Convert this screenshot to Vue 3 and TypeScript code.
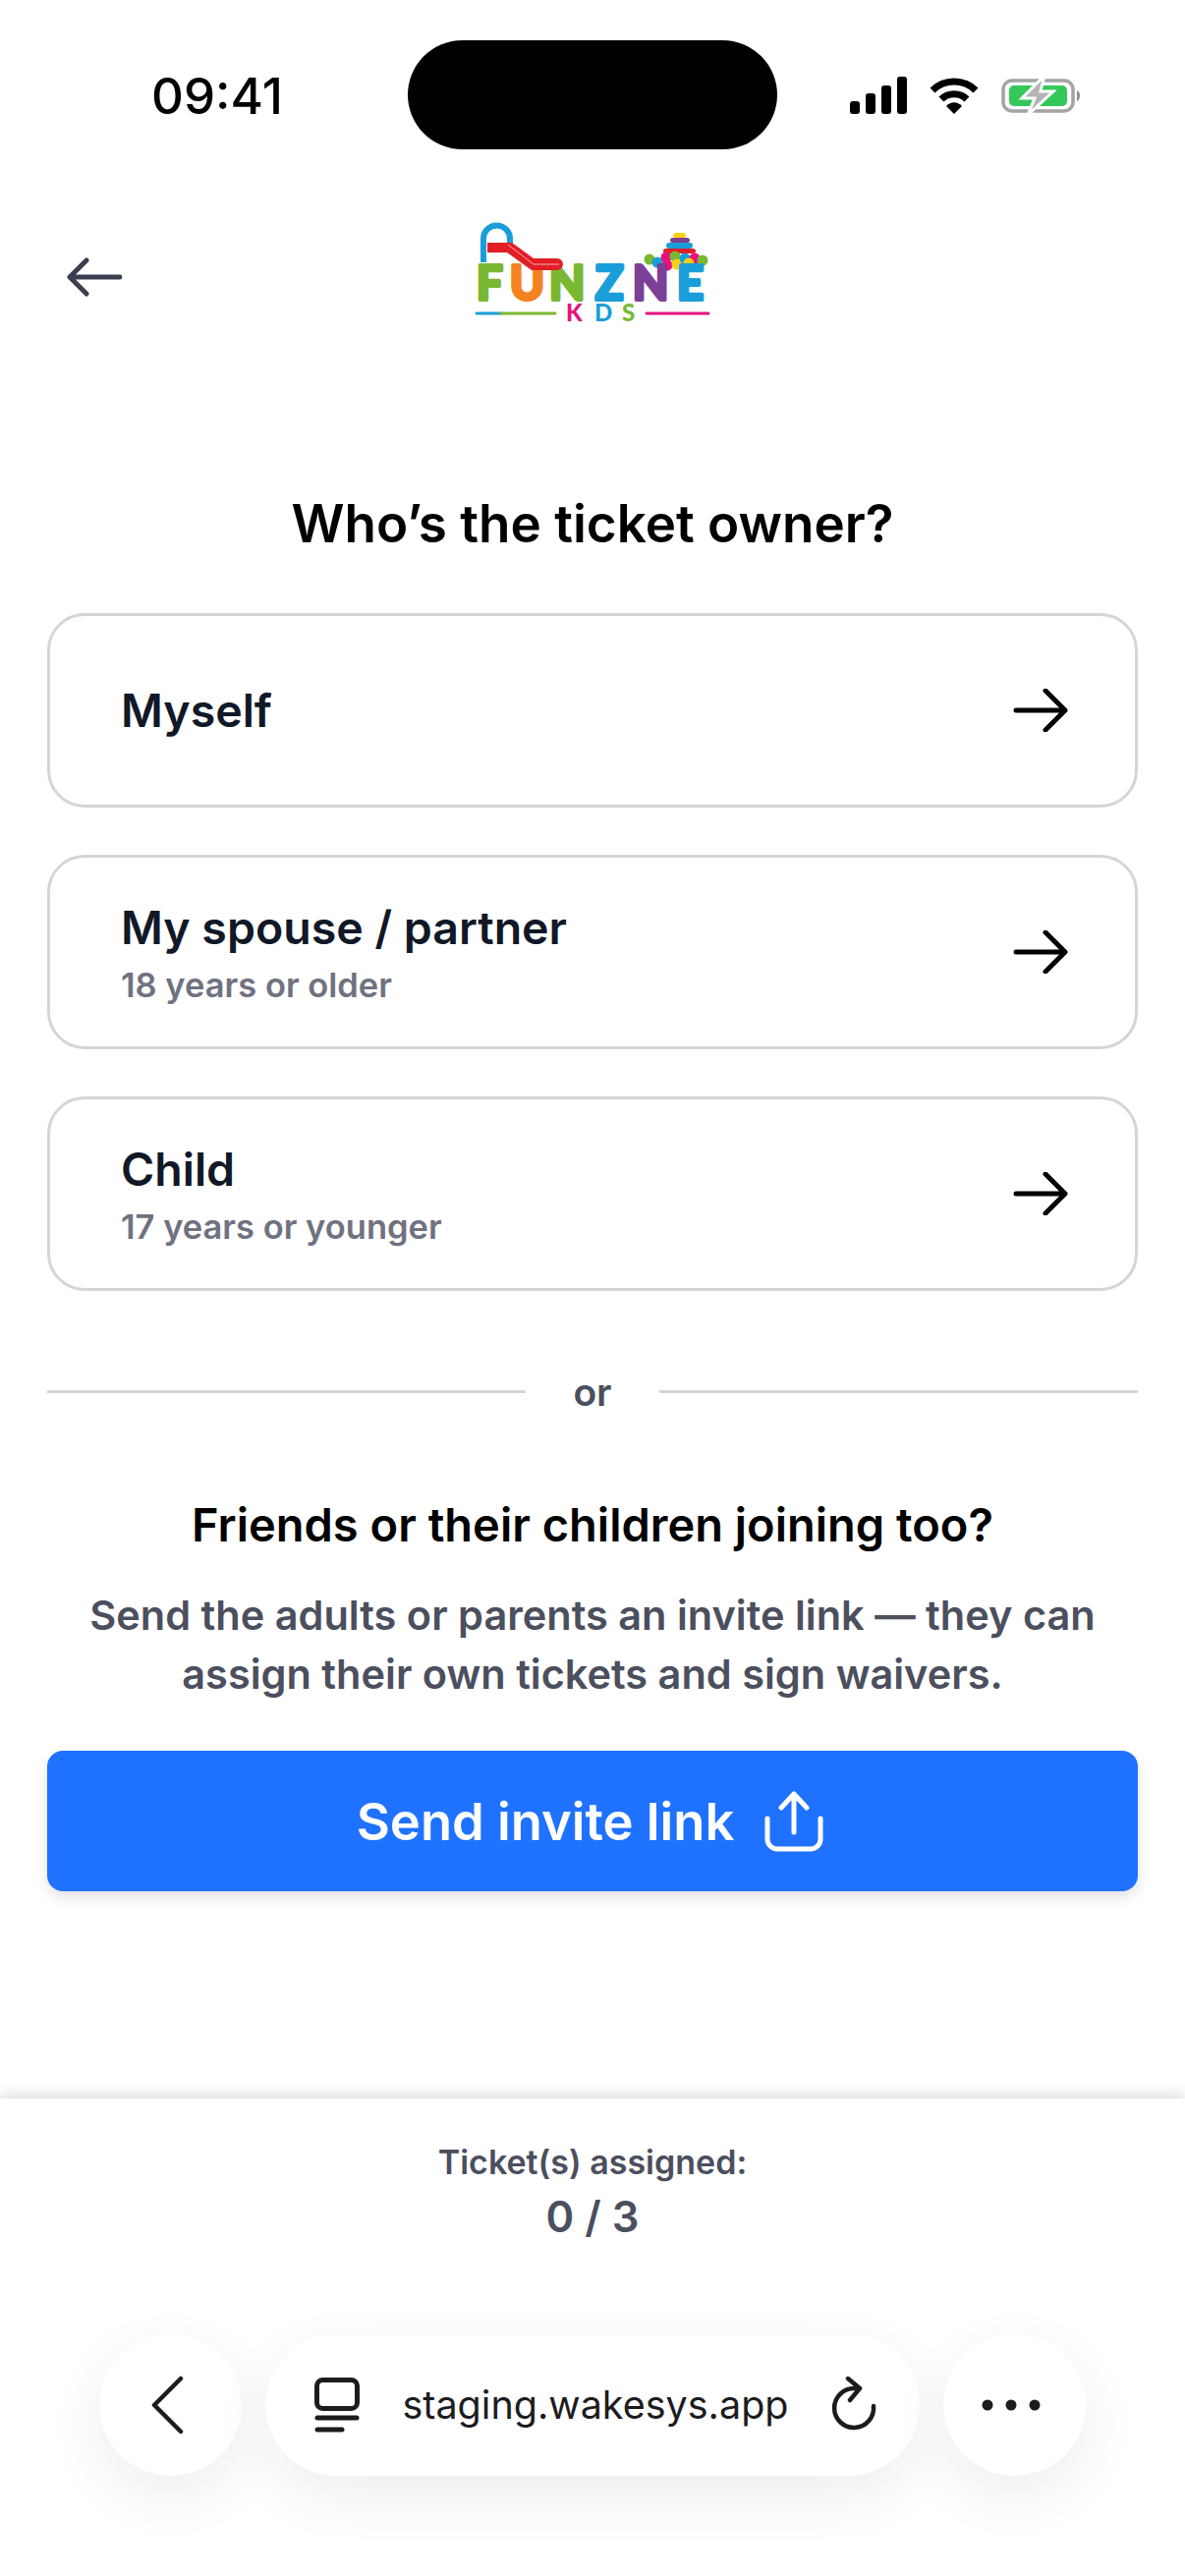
<script setup lang="ts">
interface Owner {
  title: string
  sub?: string
}

const owners: Owner[] = [
  { title: 'Myself' },
  { title: 'My spouse / partner', sub: '18 years or older' },
  { title: 'Child', sub: '17 years or younger' }
]

const balls = [
  { x: 178, y: 37, c: '#7ab833' },
  { x: 186, y: 40, c: '#1a9ed9' },
  { x: 195, y: 35, c: '#e5147d' },
  { x: 196, y: 43, c: '#e5147d' },
  { x: 204, y: 34, c: '#7ab833' },
  { x: 206, y: 42, c: '#fbd114' },
  { x: 214, y: 36, c: '#1a9ed9' },
  { x: 217, y: 42, c: '#1a9ed9' },
  { x: 224, y: 36, c: '#e5147d' },
  { x: 218, y: 41, c: '#fbd114' },
  { x: 232, y: 38, c: '#7ab833' }
]

const bigLetters = [
  { ch: 'F', x: 2, c: '#7ab833' },
  { ch: 'U', x: 36, c: '#f58220' },
  { ch: 'N', x: 76, c: '#7ab833' },
  { ch: 'Z', x: 123, c: '#1a9ed9' },
  { ch: 'N', x: 161, c: '#7b3f98' },
  { ch: 'E', x: 206, c: '#1a9ed9' }
]

const smallLetters = [
  { ch: 'K', x: 93, c: '#e5147d' },
  { ch: 'D', x: 122, c: '#1a9ed9' },
  { ch: 'S', x: 150, c: '#7ab833' }
]
</script>

<template>
  <div class="page">
    <div class="status-bar">
      <div class="time">09:41</div>
      <div class="island"></div>
      <div class="status-icons">
        <svg width="58" height="38" viewBox="0 0 58 38">
          <rect x="0" y="25" width="10" height="13" rx="3" />
          <rect x="16" y="17" width="10" height="21" rx="3" />
          <rect x="32" y="9" width="10" height="29" rx="3" />
          <rect x="48" y="0" width="10" height="38" rx="3" />
        </svg>
        <svg width="50" height="38" viewBox="0 0 50 38">
          <path d="M3 14 C15 2 35 2 47 14" fill="none" stroke="#000" stroke-width="7" />
          <path d="M12 23 C19 16 31 16 38 23" fill="none" stroke="#000" stroke-width="7" />
          <path d="M17 30 C22 25 28 25 33 30 L25 38 Z" fill="#000" />
        </svg>
        <svg width="82" height="40" viewBox="0 0 82 40">
          <rect x="2" y="5" width="71" height="31" rx="9" fill="none" stroke="#a4a4a4" stroke-width="3.5" />
          <rect x="8" y="10" width="59" height="21" rx="5" fill="#34c759" />
          <path d="M77 15 C81 16 81 25 77 26 Z" fill="#8e8e8e" />
          <path d="M44 0 L21 23 H34 L27 40 L53 16 H40 Z" fill="#b4b4b4" stroke="#fff" stroke-width="3" />
        </svg>
      </div>
    </div>

    <header class="topbar">
      <svg class="back-arrow" width="56" height="40" viewBox="0 0 56 40">
        <path d="M54 20 H3 M20 3 L3 20 L20 37" fill="none" stroke="#3a3f50" stroke-width="5" stroke-linecap="round" stroke-linejoin="round" />
      </svg>
      <svg class="logo" width="240" height="102" viewBox="0 0 240 102">
        <path d="M9 40 V16 A13.5 13.5 0 0 1 36 16 V23" fill="none" stroke="#1a9ed9" stroke-width="6" />
        <rect x="202" y="10" width="13" height="5" rx="2.5" fill="#fbd114" />
        <rect x="199" y="15" width="20" height="5" rx="2.5" fill="#7b3f98" />
        <rect x="195" y="20" width="27" height="6" rx="3" fill="#1a9ed9" />
        <rect x="192" y="26" width="33" height="5" rx="2.5" fill="#e31e26" />
        <circle v-for="(b, i) in balls" :key="i" :cx="b.x" :cy="b.y" r="5.5" :fill="b.c" />
        <text class="logo-big" y="78"><tspan v-for="(l, i) in bigLetters" :key="i" :x="l.x" :fill="l.c" :stroke="l.c">{{ l.ch }}</tspan></text>
        <path d="M13 20 H38 L60 36 H84 A6 6 0 0 1 84 48 H58 L33 30 H13 Z" fill="#e31e26" />
        <path d="M34 22 L60 42 H86" fill="none" stroke="#fff" stroke-width="0.8" opacity="0.8" />
        <text class="logo-small" y="100"><tspan v-for="(l, i) in smallLetters" :key="i" :x="l.x" :fill="l.c">{{ l.ch }}</tspan></text>
        <path d="M2 92 H27" stroke="#1a9ed9" stroke-width="3" stroke-linecap="round" />
        <path d="M27 92 H82" stroke="#7ab833" stroke-width="3" stroke-linecap="round" />
        <path d="M175 92 H238" stroke="#e5147d" stroke-width="3" stroke-linecap="round" />
      </svg>
      <div></div>
    </header>

    <main class="content">
      <h1 class="title">Who’s the ticket owner?</h1>

      <div class="owner-list">
        <div v-for="owner in owners" :key="owner.title" class="owner-card">
          <div class="owner-text">
            <div class="owner-title">{{ owner.title }}</div>
            <div v-if="owner.sub" class="owner-sub">{{ owner.sub }}</div>
          </div>
          <svg width="56" height="44" viewBox="0 0 56 44">
            <path d="M3 22 H52 M33 2 L53 22 L33 42" fill="none" stroke="#000" stroke-width="5" stroke-linecap="round" stroke-linejoin="round" />
          </svg>
        </div>
      </div>

      <div class="or-row">
        <span class="or-line"></span>
        <span class="or-text">or</span>
        <span class="or-line"></span>
      </div>

      <h2 class="invite-title">Friends or their children joining too?</h2>
      <p class="invite-text">Send the adults or parents an invite link — they can<br />assign their own tickets and sign waivers.</p>

      <button class="invite-btn">
        <span>Send invite link</span>
        <svg width="60" height="62" viewBox="0 0 60 62">
          <path d="M30 42 V3 M17 17 L30 3 L43 17" fill="none" stroke="#fff" stroke-width="5" stroke-linecap="round" stroke-linejoin="round" />
          <path d="M3 28 V49 A10 10 0 0 0 13 59 H47 A10 10 0 0 0 57 49 V28" fill="none" stroke="#fff" stroke-width="5" stroke-linecap="round" />
        </svg>
      </button>
    </main>

    <footer class="footer">
      <div class="assigned-label">Ticket(s) assigned:</div>
      <div class="assigned-count">0 / 3</div>

      <div class="browser-bar">
        <div class="round-btn">
          <svg class="shift-left" width="36" height="60" viewBox="0 0 36 60">
            <path d="M32 3 L5 30 L32 57" fill="none" stroke="#1c1c1e" stroke-width="4.5" stroke-linecap="round" stroke-linejoin="round" />
          </svg>
        </div>
        <div class="url-pill">
          <svg width="46" height="56" viewBox="0 0 46 56">
            <rect x="2.5" y="2.5" width="41" height="29" rx="6" fill="none" stroke="#1c1c1e" stroke-width="5" />
            <path d="M3 41 H43 M3 53 H28" stroke="#1c1c1e" stroke-width="5" stroke-linecap="round" />
          </svg>
          <span class="url-text">staging.wakesys.app</span>
          <svg width="48" height="58" viewBox="0 0 48 58">
            <path d="M24 12 A20 20 0 1 0 43 30" fill="none" stroke="#1c1c1e" stroke-width="4.5" stroke-linecap="round" />
            <path d="M17 2 L29 12 L19 24" fill="none" stroke="#1c1c1e" stroke-width="4.5" stroke-linecap="round" stroke-linejoin="round" />
          </svg>
        </div>
        <div class="round-btn">
          <svg class="shift-left" width="60" height="12" viewBox="0 0 60 12">
            <circle cx="6" cy="6" r="5.5" fill="#1c1c1e" />
            <circle cx="30" cy="6" r="5.5" fill="#1c1c1e" />
            <circle cx="54" cy="6" r="5.5" fill="#1c1c1e" />
          </svg>
        </div>
      </div>
    </footer>
  </div>
</template>

<style>
html,
body {
  margin: 0;
  background: #fff;
}
</style>

<style scoped>
.page {
  width: 1206px;
  height: 2622px;
  display: flex;
  flex-direction: column;
  background: #fff;
  font-family: Inter, "Noto Sans", sans-serif;
  overflow: hidden;
}

.status-bar {
  height: 149px;
  padding-top: 41px;
  display: grid;
  grid-template-columns: 415px 376px 1fr;
  align-items: start;
}

.time {
  height: 111px;
  padding-left: 154px;
  line-height: 114px;
  font-size: 51px;
  font-weight: 500;
  color: #000;
}

.island {
  height: 111px;
  border-radius: 56px;
  background: #000;
}

.status-icons {
  height: 111px;
  padding-left: 74px;
  display: flex;
  align-items: center;
  gap: 23px;
}

.topbar {
  height: 184px;
  display: grid;
  grid-template-columns: 1fr auto 1fr;
  align-items: center;
}

.back-arrow {
  margin-left: 68px;
}

.logo {
  margin-bottom: 8px;
  overflow: visible;
}

.logo-big {
  font-family: Lato, sans-serif;
  font-size: 47px;
  font-weight: 700;
  stroke-width: 4;
  stroke-linejoin: round;
}

.logo-small {
  font-family: Lato, sans-serif;
  font-size: 24px;
  font-weight: 900;
}

.content {
  padding: 129px 48px 0;
  display: flex;
  flex-direction: column;
}

.title {
  margin: 0 0 61px;
  text-align: center;
  font-size: 53px;
  line-height: 60px;
  font-weight: 600;
  color: #000;
}

.owner-list {
  display: flex;
  flex-direction: column;
  gap: 48px;
}

.owner-card {
  box-sizing: border-box;
  height: 198px;
  padding: 0 68px 0 72px;
  display: flex;
  align-items: center;
  justify-content: space-between;
  border: 3px solid #d4d5d9;
  border-radius: 38px;
}

.owner-title {
  font-size: 46.5px;
  line-height: 60px;
  font-weight: 600;
  color: #111827;
}

.owner-sub {
  margin-top: 7px;
  font-size: 34.5px;
  line-height: 44px;
  font-weight: 600;
  color: #6f7280;
}

.or-row {
  margin-top: 82px;
  height: 40px;
  display: flex;
  align-items: center;
}

.or-line {
  flex: 1;
  height: 3px;
  background: #d4d5d9;
}

.or-text {
  width: 136px;
  text-align: center;
  font-size: 39px;
  font-weight: 600;
  color: #4b4f5e;
}

.invite-title {
  margin: 91px 0 0;
  text-align: center;
  font-size: 47px;
  line-height: 50px;
  font-weight: 600;
  color: #000;
}

.invite-text {
  margin: 37px 0 0;
  text-align: center;
  font-size: 41.5px;
  line-height: 60px;
  font-weight: 600;
  color: #4b4f5e;
}

.invite-btn {
  margin-top: 48px;
  height: 143px;
  padding-right: 11px;
  display: flex;
  align-items: center;
  justify-content: center;
  gap: 31px;
  border: none;
  border-radius: 16px;
  background: #1f72ff;
  box-shadow: 0 6px 14px rgba(0, 0, 0, 0.12);
  color: #fff;
  font-family: inherit;
  font-size: 52.5px;
  font-weight: 600;
}

.footer {
  margin-top: auto;
  box-sizing: border-box;
  height: 486px;
  padding-top: 43px;
  display: flex;
  flex-direction: column;
  align-items: center;
  background: #fff;
  box-shadow: 0 -4px 14px rgba(0, 0, 0, 0.14);
}

.assigned-label {
  font-size: 34px;
  line-height: 44px;
  font-weight: 600;
  color: #4b4f5e;
}

.assigned-count {
  margin-top: 8px;
  font-size: 43.5px;
  line-height: 50px;
  font-weight: 600;
  color: #4b4f5e;
}

.browser-bar {
  margin-top: 95px;
  align-self: flex-start;
  margin-left: 101px;
  display: flex;
  gap: 24px;
}

.round-btn {
  width: 145px;
  height: 144px;
  display: flex;
  align-items: center;
  justify-content: center;
  border-radius: 50%;
  background: #fff;
  box-shadow: 0 20px 60px rgba(0, 0, 0, 0.07);
}

.shift-left {
  margin-right: 7px;
}

.url-pill {
  box-sizing: border-box;
  width: 666px;
  height: 144px;
  padding: 0 42px 0 50px;
  display: flex;
  align-items: center;
  justify-content: space-between;
  border-radius: 72px;
  background: #fff;
  box-shadow: 0 20px 60px rgba(0, 0, 0, 0.07);
}

.url-text {
  font-size: 39.5px;
  font-weight: 400;
  color: #1c1c1e;
}
</style>
